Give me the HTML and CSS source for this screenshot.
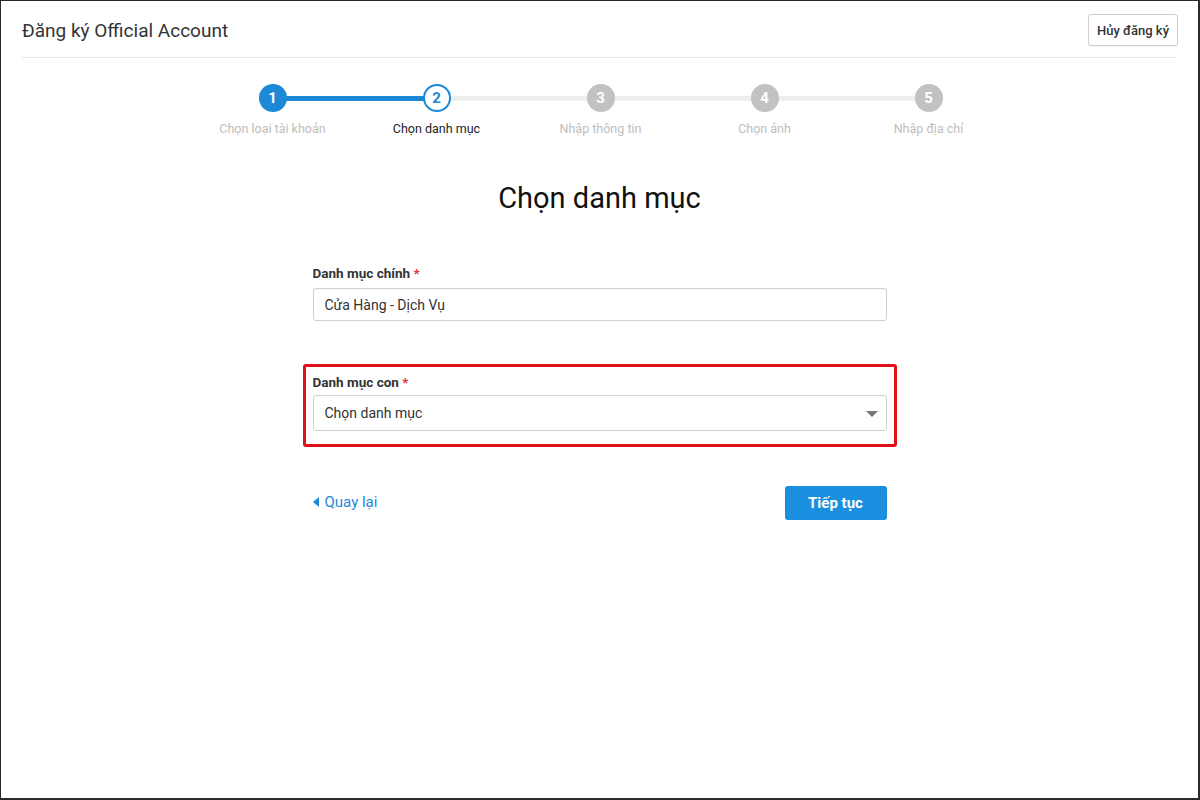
FILE: index.html
```html
<!DOCTYPE html>
<html lang="vi">
<head>
<meta charset="utf-8">
<title>Đăng ký Official Account</title>
<link rel="stylesheet" href="styles.css">
</head>
<body>
<div class="frame">
  <header class="header">
    <h1 class="title">Đăng ký Official Account</h1>
    <button class="btn-cancel" type="button">Hủy đăng ký</button>
  </header>

  <ol class="stepper">
    <li class="step done">
      <span class="track"></span>
      <span class="dot">1</span>
      <span class="step-label">Chọn loại tài khoản</span>
    </li>
    <li class="step active">
      <span class="track"></span>
      <span class="dot">2</span>
      <span class="step-label">Chọn danh mục</span>
    </li>
    <li class="step">
      <span class="track"></span>
      <span class="dot">3</span>
      <span class="step-label">Nhập thông tin</span>
    </li>
    <li class="step">
      <span class="track"></span>
      <span class="dot">4</span>
      <span class="step-label">Chọn ảnh</span>
    </li>
    <li class="step last">
      <span class="track"></span>
      <span class="dot">5</span>
      <span class="step-label">Nhập địa chỉ</span>
    </li>
  </ol>

  <h2 class="heading">Chọn danh mục</h2>

  <form class="form">
    <div class="field">
      <label class="label">Danh mục chính <span class="req">*</span></label>
      <div class="input">Cửa Hàng - Dịch Vụ</div>
    </div>

    <div class="field highlight">
      <label class="label">Danh mục con <span class="req">*</span></label>
      <div class="select">
        <span>Chọn danh mục</span>
        <span class="caret"></span>
      </div>
    </div>

    <div class="actions">
      <a class="back" href="#"><span class="back-caret"></span>Quay lại</a>
      <button class="btn-next" type="button">Tiếp tục</button>
    </div>
  </form>
</div>
</body>
</html>
```

FILE: styles.css
```css
* { box-sizing: border-box; }

html, body {
  margin: 0;
  padding: 0;
  background: #fff;
}

body {
  font-family: Roboto, "Noto Sans", "Liberation Sans", sans-serif;
  color: #333;
}

.frame {
  width: 1200px;
  height: 800px;
  border: 1px solid #2a2a2a;
  border-width: 1px 2px 2px 1px;
  background: #fff;
  overflow: hidden;
}

.header {
  margin: 0 21px;
  height: 57px;
  padding-top: 2px;
  display: flex;
  align-items: center;
  justify-content: space-between;
  border-bottom: 1px solid #e8e8e8;
}

.title {
  margin: 0;
  font-size: 19px;
  font-weight: 400;
  color: #333;
}

.btn-cancel {
  font-family: inherit;
  font-size: 13px;
  font-weight: 500;
  color: #333;
  background: #fff;
  border: 1px solid #cfcfcf;
  border-radius: 3px;
  height: 32px;
  padding: 0 8px;
  margin-right: -1px;
  box-shadow: 0 1px 1px rgba(0,0,0,0.05);
}

.stepper {
  list-style: none;
  margin: 26px auto 0;
  padding: 0 0 0 2px;
  width: 822px;
  display: grid;
  grid-template-columns: repeat(5, 164px);
}

.step {
  position: relative;
  display: flex;
  flex-direction: column;
  align-items: center;
}

.track {
  position: absolute;
  top: 12px;
  left: 50%;
  width: 164px;
  height: 5px;
  background: #eeeeee;
}

.step.done .track { background: #1b88d8; }
.step.last .track { display: none; }

.dot {
  position: relative;
  z-index: 1;
  width: 28px;
  height: 28px;
  border-radius: 50%;
  background: #c2c2c2;
  color: #fff;
  font-size: 15px;
  font-weight: 700;
  display: flex;
  align-items: center;
  justify-content: center;
}

.step.done .dot {
  background: #1b88d8;
  color: #fff;
}

.step.active .dot {
  background: #fff;
  border: 2px solid #1b88d8;
  color: #1b88d8;
}

.step-label {
  margin-top: 9px;
  font-size: 12.5px;
  line-height: 16px;
  color: #bdbdbd;
  white-space: nowrap;
}

.step.active .step-label { color: #222; }

.heading {
  margin: 44px 0 0;
  text-align: center;
  font-size: 29px;
  line-height: 34px;
  font-weight: 400;
  color: #111;
}

.form {
  width: 574px;
  margin: 50px auto 0;
  display: flex;
  flex-direction: column;
}

.field {
  display: flex;
  flex-direction: column;
}

.label {
  font-size: 13.5px;
  line-height: 17px;
  font-weight: 700;
  color: #333;
  margin-bottom: 6px;
}

.req { color: #e0303a; }

.input {
  height: 33px;
  border: 1px solid #d0d0d0;
  border-radius: 3px;
  padding: 0 11px;
  display: flex;
  align-items: center;
  font-size: 14px;
  color: #333;
  box-shadow: inset 0 1px 1px rgba(0,0,0,0.03);
}

.highlight {
  margin: 43px -10px 0;
  border: 3px solid #e0101a;
  border-radius: 3px;
  padding: 7px 7px 13px;
}

.highlight .label { margin-bottom: 4px; }

.select {
  height: 36px;
  border: 1px solid #d0d0d0;
  border-radius: 3px;
  padding: 0 8px 0 11px;
  display: flex;
  align-items: center;
  justify-content: space-between;
  font-size: 14px;
  color: #333;
}

.caret {
  width: 0;
  height: 0;
  border-left: 6px solid transparent;
  border-right: 6px solid transparent;
  border-top: 6px solid #777;
  margin-top: 1px;
}

.actions {
  margin-top: 39px;
  display: flex;
  align-items: center;
  justify-content: space-between;
}

.back {
  display: flex;
  align-items: center;
  gap: 6px;
  font-size: 15px;
  color: #1b88d8;
  text-decoration: none;
  margin-top: -3px;
}

.back-caret {
  width: 0;
  height: 0;
  border-top: 5px solid transparent;
  border-bottom: 5px solid transparent;
  border-right: 6px solid #1b88d8;
}

.btn-next {
  font-family: inherit;
  width: 102px;
  height: 34px;
  border: none;
  border-radius: 3px;
  background: #1a8fe0;
  color: #fff;
  font-size: 15px;
  font-weight: 700;
}
```
